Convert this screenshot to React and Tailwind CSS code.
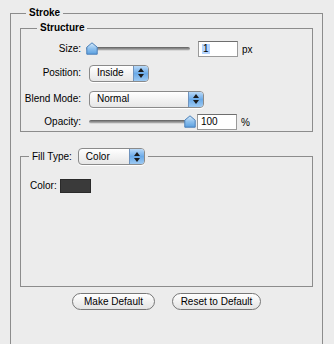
const font = { fontFamily: '"Liberation Sans", Arial, sans-serif' }

function Thumb() {
  return (
    <svg width="12" height="13" viewBox="0 0 12 13" className="shrink-0">
      <defs>
        <linearGradient id="tg" x1="0" y1="0" x2="0" y2="1">
          <stop offset="0" stopColor="#d9ecfb" />
          <stop offset="0.5" stopColor="#8fc1ee" />
          <stop offset="1" stopColor="#5aa0e0" />
        </linearGradient>
      </defs>
      <path d="M6 0.8 L11.2 5.2 L11.2 12.2 L0.8 12.2 L0.8 5.2 Z" fill="url(#tg)" stroke="#4a7fb8" strokeWidth="1" />
    </svg>
  )
}

function Slider({ width, value }) {
  return (
    <div className="relative flex items-center h-[14px]" style={{ width }}>
      <div className="h-[4px] w-full rounded-full bg-gradient-to-b from-[#5e5e5e] to-[#b4b4b4] border-b border-[#d8d8d8]" />
      <div className="absolute top-[0px]" style={{ left: value }}>
        <Thumb />
      </div>
    </div>
  )
}

function Popup({ label, width }) {
  return (
    <div
      className="flex items-stretch h-[17px] rounded-[4px] border border-[#8a8a8a] bg-gradient-to-b from-white to-[#e6e6e6] overflow-hidden shadow-[0_1px_0_#fff]"
      style={{ width }}
    >
      <div className="flex-1 pl-[7px] flex items-center text-[10px] text-black leading-none">{label}</div>
      <div className="w-[15px] flex flex-col items-center justify-center gap-[2px] bg-gradient-to-b from-[#b9d9f7] via-[#6aaae8] to-[#9cc9f2] border-l border-[#6f93bd]">
        <svg width="6" height="4" viewBox="0 0 6 4"><path d="M3 0 L6 4 L0 4 Z" fill="#1b1b1b" /></svg>
        <svg width="6" height="4" viewBox="0 0 6 4"><path d="M0 0 L6 0 L3 4 Z" fill="#1b1b1b" /></svg>
      </div>
    </div>
  )
}

function Field({ children, selected }) {
  return (
    <div className="w-[40px] h-[16px] bg-white border border-[#9a9a9a] border-t-[#6e6e6e] flex items-center pl-[3px] text-[10px] leading-none text-black">
      {selected ? <span className="bg-[#b5d5ff] px-[1px]">{children}</span> : children}
    </div>
  )
}

function Row({ label, children, className = '' }) {
  return (
    <div className={`flex items-center h-[16px] ${className}`}>
      <div className="w-[60px] text-right text-[10px] text-black leading-none">{label}</div>
      {children}
    </div>
  )
}

// group box title sitting on the top border
function Title({ children, className = '' }) {
  return (
    <div className={`w-fit px-[3px] bg-[#ececec] text-[10px] leading-[12px] font-bold text-black ${className}`}>
      {children}
    </div>
  )
}

export default function App() {
  return (
    <div className="w-[334px] h-[344px] overflow-hidden bg-[#ececec] pt-[13px]" style={font}>
      <div className="ml-[10px] w-[313px] h-[360px] border border-[#8c8c8c] pl-[9px]">
        <Title className="-mt-[7px] ml-[6px]">Stroke</Title>

        <div className="mt-[9px] w-[293px] border border-[#8c8c8c] pb-[1px]">
          <Title className="-mt-[7px] ml-[16px]">Structure</Title>

          <Row label="Size:" className="mt-[7px]">
            <div className="ml-[5px]">
              <Slider width={104} value={0} />
            </div>
            <div className="ml-[8px]"><Field selected>1</Field></div>
            <span className="ml-[4px] text-[10px] text-black">px</span>
          </Row>

          <Row label="Position:" className="mt-[8px]">
            <div className="ml-[8px]"><Popup label="Inside" width={60} /></div>
          </Row>

          <Row label="Blend Mode:" className="mt-[10px]">
            <div className="ml-[8px]"><Popup label="Normal" width={115} /></div>
          </Row>

          <Row label="Opacity:" className="mt-[7px]">
            <div className="ml-[8px]">
              <Slider width={106} value={95} />
            </div>
            <div className="ml-[2px]"><Field>100</Field></div>
            <span className="ml-[4px] text-[10px] text-black">%</span>
          </Row>
        </div>

        <div className="mt-[24px] w-[293px] h-[131px] border border-[#8c8c8c] pl-[9px]">
          <div className="-mt-[9px] -ml-[1px] w-fit px-[3px] bg-[#ececec] flex items-center">
            <span className="text-[10px] text-black leading-none">Fill Type:</span>
            <div className="ml-[6px]"><Popup label="Color" width={67} /></div>
          </div>
          <div className="mt-[14px] flex items-center">
            <span className="text-[10px] text-black leading-none">Color:</span>
            <div className="ml-[3px] w-[31px] h-[14px] bg-[#3a3a3a] border border-[#2a2a2a]" />
          </div>
        </div>

        <div className="mt-[6px] ml-[52px] flex gap-[17px]">
          <button className="w-[83px] h-[17px] rounded-full border border-[#777] bg-gradient-to-b from-white to-[#e4e4e4] text-[10px] text-black leading-none">
            Make Default
          </button>
          <button className="w-[89px] h-[17px] rounded-full border border-[#777] bg-gradient-to-b from-white to-[#e4e4e4] text-[10px] text-black leading-none">
            Reset to Default
          </button>
        </div>
      </div>
    </div>
  )
}
